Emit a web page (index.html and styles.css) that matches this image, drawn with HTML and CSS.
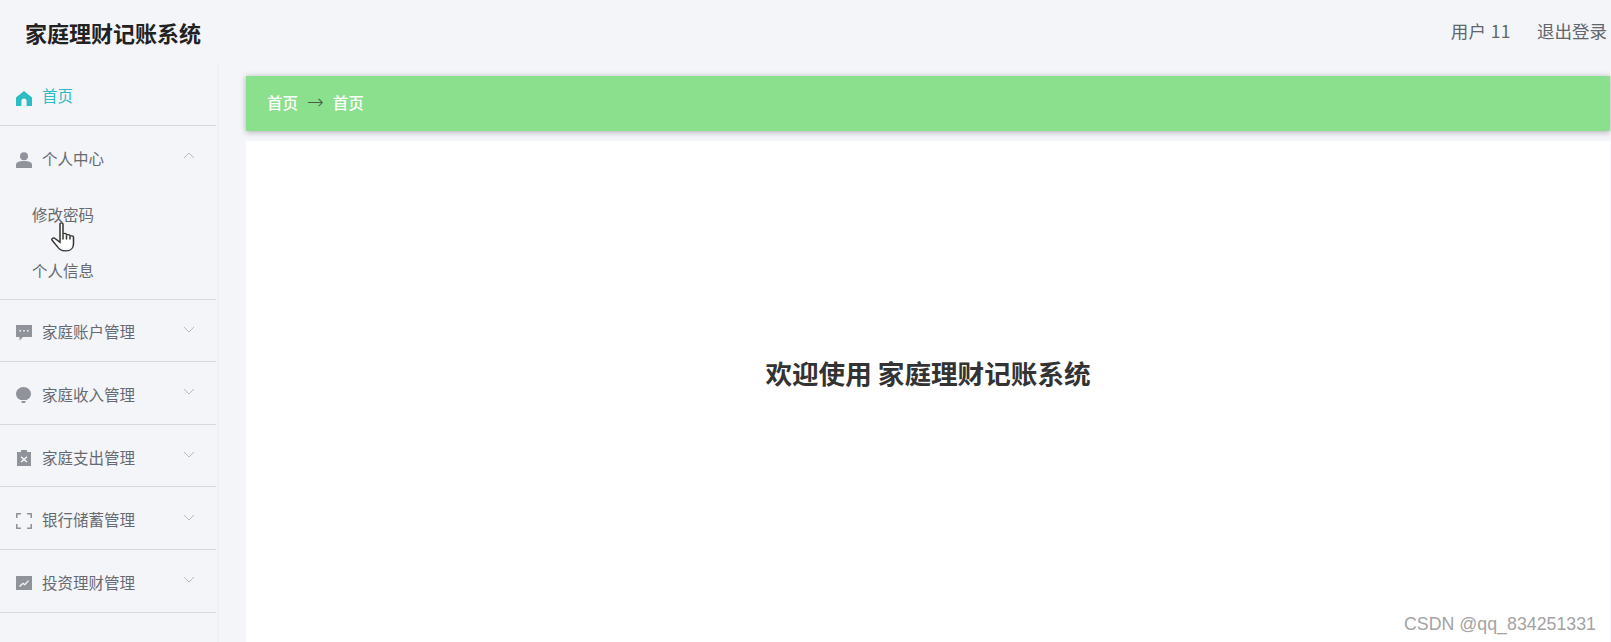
FILE: index.html
```html
<!DOCTYPE html>
<html>
<head>
    <meta charset="UTF-8">
    <title>家庭理财记账系统</title>
    <link rel="stylesheet" href="styles.css">
</head>
<body>
    <div class="header">
        <div class="logo">家庭理财记账系统</div>
        <div class="user">
            <span class="user-name">用户 11</span>
            <span>退出登录</span>
        </div>
    </div>
    <div class="layout">
        <div class="aside">
            <div class="menu-row home on">
                <svg class="icon" viewBox="0 0 16 16"><path d="M8 1 L16 7.6 V16 H10.6 V11 A2.6 2.6 0 0 0 5.4 11 V16 H0 V7.6 Z"/></svg>
                <span class="menu-text">首页</span>
            </div>
            <div class="menu-group">
                <div class="menu-head">
                    <svg class="icon" viewBox="0 0 16 16"><circle cx="8" cy="4.2" r="4"/><path d="M0 13 C0 10 3 9 8 9 S16 10 16 13 V16 H0 Z"/></svg>
                    <span class="menu-text">个人中心</span>
                    <svg class="arrow" viewBox="0 0 12 7"><path d="M1 6 L6 1 L11 6"/></svg>
                </div>
                <div class="sub-item">修改密码</div>
                <div class="sub-item">个人信息</div>
            </div>
            <div class="menu-row">
                <svg class="icon" viewBox="0 0 16 16"><path fill-rule="evenodd" d="M0 0 H16 V12 H7 L3.5 15.5 V12 H0 Z M3.4 5 V6.6 H5 V5 Z M7.2 5 V6.6 H8.8 V5 Z M11 5 V6.6 H12.6 V5 Z"/></svg>
                <span class="menu-text">家庭账户管理</span>
                <svg class="arrow" viewBox="0 0 12 7"><path d="M1 1 L6 6 L11 1"/></svg>
            </div>
            <div class="menu-row">
                <svg class="icon" viewBox="0 0 16 16"><path d="M7.5 0 C11.6 0 15 3 15 6.8 C15 10 13 12 10.5 13 H4.5 C2 12 0 10 0 6.8 C0 3 3.4 0 7.5 0 Z M5.4 14 H9.6 V15 L8.8 16 H6.2 L5.4 15 Z"/></svg>
                <span class="menu-text">家庭收入管理</span>
                <svg class="arrow" viewBox="0 0 12 7"><path d="M1 1 L6 6 L11 1"/></svg>
            </div>
            <div class="menu-row">
                <svg class="icon" viewBox="0 0 16 16"><path fill-rule="evenodd" d="M5 0 H11 V2 H15 V16 H1 V2 H5 Z M5.6 6.2 L4.6 7.2 L6.9 9.4 L4.6 11.6 L5.6 12.6 L8 10.4 L10.4 12.6 L11.4 11.6 L9.1 9.4 L11.4 7.2 L10.4 6.2 L8 8.4 Z"/></svg>
                <span class="menu-text">家庭支出管理</span>
                <svg class="arrow" viewBox="0 0 12 7"><path d="M1 1 L6 6 L11 1"/></svg>
            </div>
            <div class="menu-row">
                <svg class="icon" viewBox="0 0 16 16"><path d="M0 0 H5 V1.6 H1.6 V5 H0 Z M11 0 H16 V5 H14.4 V1.6 H11 Z M0 11 H1.6 V14.4 H5 V16 H0 Z M14.4 11 H16 V16 H11 V14.4 H14.4 Z"/></svg>
                <span class="menu-text">银行储蓄管理</span>
                <svg class="arrow" viewBox="0 0 12 7"><path d="M1 1 L6 6 L11 1"/></svg>
            </div>
            <div class="menu-row">
                <svg class="icon" viewBox="0 0 16 16"><path fill-rule="evenodd" d="M0 1 H16 V15 H0 Z M3 11 L4 12 L7 9.2 L9 10.6 L13 6 L12 5.2 L8.8 8.8 L6.9 7.4 Z"/></svg>
                <span class="menu-text">投资理财管理</span>
                <svg class="arrow" viewBox="0 0 12 7"><path d="M1 1 L6 6 L11 1"/></svg>
            </div>
        </div>
        <div class="main">
            <div class="crumb">
                <span>首页</span>
                <span class="crumb-sep">→</span>
                <span>首页</span>
            </div>
            <div class="panel">
                <h1 class="welcome">欢迎使用 家庭理财记账系统</h1>
            </div>
        </div>
    </div>
    <!-- 鼠标指针 -->
    <svg class="cursor" viewBox="0 0 20 29" preserveAspectRatio="none">
        <path d="M8 2 C8 .6 10.4 .6 10.4 2 V12 C10.6 10.6 13 10.6 13.2 12 V13 C13.4 11.8 15.8 11.8 16 13.2 V14 C16.4 13 18.6 13.2 18.8 14.6 V21 C18.8 25 16.6 28 12.6 28 C9 28 7.6 26.6 5.6 23.4 L1.6 17.6 C.8 16 2.8 14.8 4 16 L8 19.6 Z"/>
        <path d="M10.4 12 V17 M13.2 13 V17 M16 14 V17"/>
    </svg>
    <div class="mark">CSDN @qq_834251331</div>
</body>
</html>
```

FILE: styles.css
```css
* {
    margin: 0;
    padding: 0;
    box-sizing: border-box;
}
html, body {
    height: 642px;
    overflow: hidden;
}
body {
    display: flex;
    flex-direction: column;
    background-color: #f4f5f9;
    font-family: "Noto Sans CJK SC", "Liberation Sans", sans-serif;
    color: #666a70;
}
.header {
    display: flex;
    flex: none;
    justify-content: space-between;
    align-items: center;
    height: 64px;
    padding: 0 4px 1px 25px;
}
.logo {
    font-size: 22px;
    font-weight: 700;
    color: #222;
}
.user {
    display: flex;
    gap: 26px;
    padding-bottom: 3px;
    font-size: 17.5px;
    color: #62666c;
}
.user-name {
    letter-spacing: .4px;
}
.layout {
    display: flex;
    flex: 1;
    min-height: 0;
}
.aside {
    flex: none;
    width: 219px;
    padding-right: 1px;
    border-right: 2px solid #f0f1f5;
}
.menu-row, .menu-head {
    display: flex;
    align-items: center;
    padding: 0 16px;
    font-size: 15.5px;
}
.menu-row {
    height: 62.6px;
    border-bottom: 1px solid #d6d8dd;
}
.home {
    height: 61.6px;
}
.menu-head {
    height: 61px;
    padding-top: 2px;
}
.menu-group {
    height: 174px;
    border-bottom: 1px solid #d6d8dd;
}
.icon {
    flex: none;
    width: 16px;
    height: 16px;
    margin-top: 5px;
    margin-right: 10px;
    fill: #909399;
}
.home .icon {
    margin-top: 7px;
}
.menu-text {
    flex: 1;
    margin-top: 2px;
}
.on {
    color: #2cbcc4;
}
.on .icon {
    fill: #2cbcc4;
}
.arrow {
    flex: none;
    width: 12px;
    height: 7px;
    margin-right: 5px;
    margin-top: -2px;
    fill: none;
    stroke: #b8bbc1;
    stroke-width: 1;
}
.menu-head .arrow {
    margin-top: -4px;
}
.sub-item {
    display: flex;
    align-items: center;
    height: 55.5px;
    padding-left: 32px;
    font-size: 15.5px;
}
.main {
    display: flex;
    flex: 1;
    flex-direction: column;
    padding: 12px 1px 0 27px;
}
.crumb {
    display: flex;
    flex: none;
    align-items: center;
    gap: 9px;
    height: 55px;
    padding: 0 0 3px 21px;
    background-color: #8ae08d;
    box-shadow: 0 1px 6px rgba(0, 0, 0, .3);
    font-size: 15.5px;
    font-weight: 500;
    color: #fff;
}
.crumb-sep {
    font-family: "DejaVu Sans", sans-serif;
    font-size: 20px;
    font-weight: 200;
    color: #4a5a4c;
}
.panel {
    display: flex;
    flex: 1;
    justify-content: center;
    margin-top: 10px;
    padding-top: 213px;
    background-color: #fff;
}
.welcome {
    font-size: 26.6px;
    font-weight: 700;
    line-height: 38px;
    color: #333;
}
.cursor {
    position: absolute;
    left: 50px;
    top: 222px;
    width: 25px;
    height: 30px;
    fill: #fff;
    stroke: #333;
    stroke-width: 1.2;
}
.mark {
    position: absolute;
    right: 15px;
    bottom: 7px;
    font-family: "Liberation Sans", sans-serif;
    font-size: 17.8px;
    color: #a3a3a3;
}
```
